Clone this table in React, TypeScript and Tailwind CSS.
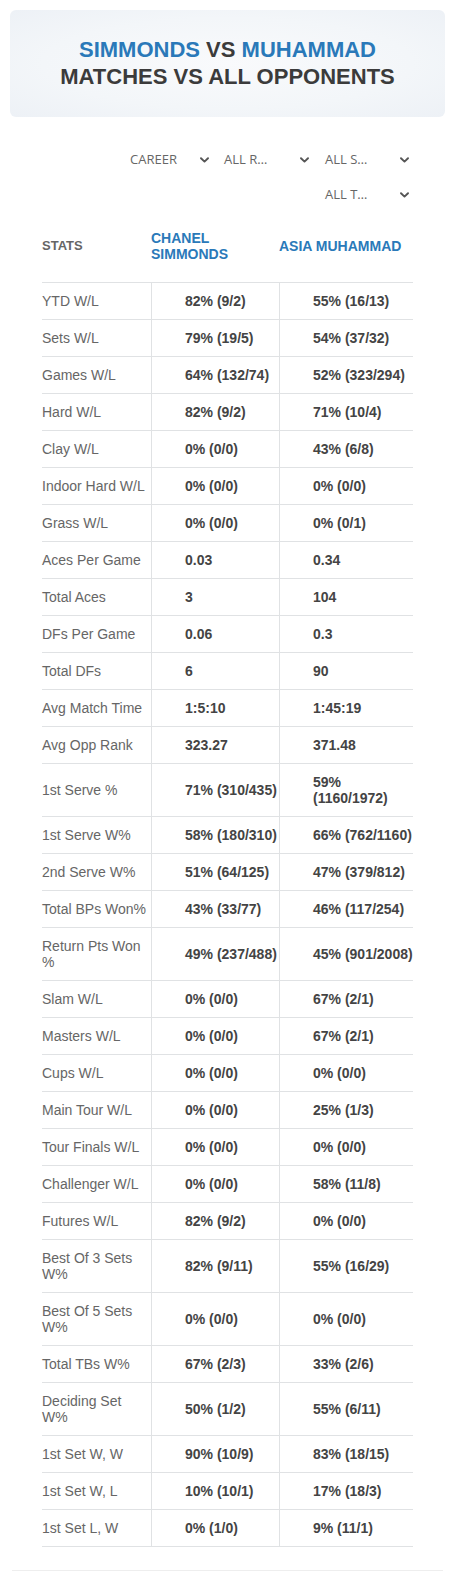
import React from "react";

const rows: [string, string, string][] = [
  ["YTD W/L", "82% (9/2)", "55% (16/13)"],
  ["Sets W/L", "79% (19/5)", "54% (37/32)"],
  ["Games W/L", "64% (132/74)", "52% (323/294)"],
  ["Hard W/L", "82% (9/2)", "71% (10/4)"],
  ["Clay W/L", "0% (0/0)", "43% (6/8)"],
  ["Indoor Hard W/L", "0% (0/0)", "0% (0/0)"],
  ["Grass W/L", "0% (0/0)", "0% (0/1)"],
  ["Aces Per Game", "0.03", "0.34"],
  ["Total Aces", "3", "104"],
  ["DFs Per Game", "0.06", "0.3"],
  ["Total DFs", "6", "90"],
  ["Avg Match Time", "1:5:10", "1:45:19"],
  ["Avg Opp Rank", "323.27", "371.48"],
  ["1st Serve %", "71% (310/435)", "59% (1160/1972)"],
  ["1st Serve W%", "58% (180/310)", "66% (762/1160)"],
  ["2nd Serve W%", "51% (64/125)", "47% (379/812)"],
  ["Total BPs Won%", "43% (33/77)", "46% (117/254)"],
  ["Return Pts Won %", "49% (237/488)", "45% (901/2008)"],
  ["Slam W/L", "0% (0/0)", "67% (2/1)"],
  ["Masters W/L", "0% (0/0)", "67% (2/1)"],
  ["Cups W/L", "0% (0/0)", "0% (0/0)"],
  ["Main Tour W/L", "0% (0/0)", "25% (1/3)"],
  ["Tour Finals W/L", "0% (0/0)", "0% (0/0)"],
  ["Challenger W/L", "0% (0/0)", "58% (11/8)"],
  ["Futures W/L", "82% (9/2)", "0% (0/0)"],
  ["Best Of 3 Sets W%", "82% (9/11)", "55% (16/29)"],
  ["Best Of 5 Sets W%", "0% (0/0)", "0% (0/0)"],
  ["Total TBs W%", "67% (2/3)", "33% (2/6)"],
  ["Deciding Set W%", "50% (1/2)", "55% (6/11)"],
  ["1st Set W, W", "90% (10/9)", "83% (18/15)"],
  ["1st Set W, L", "10% (10/1)", "17% (18/3)"],
  ["1st Set L, W", "0% (1/0)", "9% (11/1)"],
];

function Chevron() {
  return (
    <svg width="9" height="6" viewBox="0 0 9 6" fill="none">
      <path d="M1 1.2 L4.5 4.6 L8 1.2" stroke="#555" strokeWidth="1.9" strokeLinecap="round" strokeLinejoin="round" />
    </svg>
  );
}

function Select({ label, className }: { label: string; className: string }) {
  return (
    <div className={`flex items-center justify-between pr-[4px] h-[35px] ${className}`}>
      <span className="text-[13px] text-[#666]" style={{ fontFamily: '"Open Sans", "Noto Sans", sans-serif' }}>
        {label}
      </span>
      <Chevron />
    </div>
  );
}

export default function App() {
  return (
    <div className="w-[455px] bg-white" style={{ fontFamily: '"Liberation Sans", Arial, sans-serif' }}>
      <div className="pt-[10px] px-[10px]">
        <div className="h-[107px] rounded-[6px] bg-[radial-gradient(ellipse_at_center,#f9fafc_0%,#f3f6f9_60%,#edf1f6_100%)] flex flex-col items-center justify-center">
          <div className="text-[22px] leading-[26.5px] font-bold text-center">
            <span className="text-[#2a79b9]">SIMMONDS</span>
            <span className="text-[#3b3b3b]"> VS </span>
            <span className="text-[#2a79b9]">MUHAMMAD</span>
          </div>
          <div className="text-[22px] leading-[26.5px] font-bold text-center text-[#3b3b3b]">
            MATCHES VS ALL OPPONENTS
          </div>
        </div>
      </div>

      <div className="mt-[25px] pr-[42px] flex flex-col items-end">
        <div className="flex">
          <Select label="CAREER" className="w-[95px] pl-[12px]" />
          <Select label="ALL R…" className="w-[100px] pl-[11px]" />
          <Select label="ALL S…" className="w-[100px] pl-[12px]" />
        </div>
        <div className="flex">
          <Select label="ALL T…" className="w-[100px] pl-[12px]" />
        </div>
      </div>

      <div className="mx-[42px] w-[371px]">
        <div className="flex items-center pt-[18px] pb-[20px] border-b border-[#e0e2e4] leading-[16px] font-bold">
          <div className="w-[109px] text-[13px] text-[#666]">STATS</div>
          <div className="w-[128px] text-[14px] leading-[16px] text-[#2a79b9]">
            CHANEL
            <br />
            SIMMONDS
          </div>
          <div className="flex-1 text-[14px] text-[#2a79b9]">ASIA MUHAMMAD</div>
        </div>
        {rows.map(([label, a, b]) => (
          <div key={label} className="flex items-stretch border-b border-[#e0e2e4] text-[14px] leading-[16px]">
            <div className="w-[109px] pr-[4px] py-[10px] text-[#666] flex items-center">{label}</div>
            <div className="w-[128px] pl-[33px] py-[10px] border-l border-[#e0e2e4] font-bold text-[#444] flex items-center">
              {a}
            </div>
            <div className="w-[134px] pl-[33px] py-[10px] border-l border-[#e0e2e4] font-bold text-[#444] flex items-center">
              {b}
            </div>
          </div>
        ))}
      </div>

      <div className="h-[23px]" />
      <div className="mx-[12px] h-px bg-[#eeeeee]" />
      <div className="h-[9px]" />
    </div>
  );
}
